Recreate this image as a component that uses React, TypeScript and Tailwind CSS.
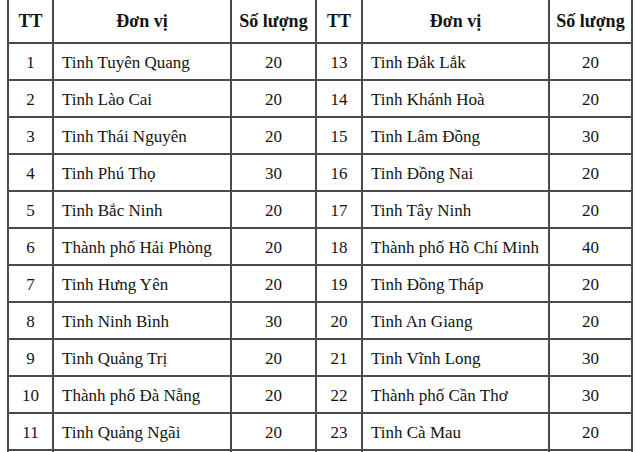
const left = [
  ['1', 'Tinh Tuyên Quang', '20'],
  ['2', 'Tinh Lào Cai', '20'],
  ['3', 'Tinh Thái Nguyên', '20'],
  ['4', 'Tinh Phú Thọ', '30'],
  ['5', 'Tinh Bắc Ninh', '20'],
  ['6', 'Thành phố Hải Phòng', '20'],
  ['7', 'Tinh Hưng Yên', '20'],
  ['8', 'Tinh Ninh Bình', '30'],
  ['9', 'Tinh Quảng Trị', '20'],
  ['10', 'Thành phố Đà Nẵng', '20'],
  ['11', 'Tinh Quảng Ngãi', '20'],
]

const right = [
  ['13', 'Tinh Đắk Lắk', '20'],
  ['14', 'Tinh Khánh Hoà', '20'],
  ['15', 'Tinh Lâm Đồng', '30'],
  ['16', 'Tinh Đồng Nai', '20'],
  ['17', 'Tinh Tây Ninh', '20'],
  ['18', 'Thành phố Hồ Chí Minh', '40'],
  ['19', 'Tinh Đồng Tháp', '20'],
  ['20', 'Tinh An Giang', '20'],
  ['21', 'Tinh Vĩnh Long', '30'],
  ['22', 'Thành phố Cần Thơ', '30'],
  ['23', 'Tinh Cà Mau', '20'],
]

function Head({ children }: { children: React.ReactNode }) {
  return <div className="bg-white flex items-center justify-center font-bold text-[18px]">{children}</div>
}

export default function App() {
  return (
    <div className="w-[640px] h-[452px] overflow-hidden bg-white text-[#141414] text-[17px] [font-family:'Liberation_Serif',serif]">
      <div className="ml-[7px] mt-[-2px] w-[626px] p-[2px] bg-[#4a4a4a] grid grid-cols-[43px_176px_83px_44px_185px_81px] grid-rows-[42px] auto-rows-[35px] gap-[2px]">
        <Head>TT</Head>
        <Head>Đơn vị</Head>
        <Head>Số lượng</Head>
        <Head>TT</Head>
        <Head>Đơn vị</Head>
        <Head>Số lượng</Head>
        {left.map((row, i) => {
          const r = right[i]
          return (
            <div key={i} className="contents">
              <div className="bg-white flex items-center justify-center pt-[3px]">{row[0]}</div>
              <div className="bg-white flex items-center pl-[8px] pt-[3px]">{row[1]}</div>
              <div className="bg-white flex items-center justify-center pt-[3px]">{row[2]}</div>
              <div className="bg-white flex items-center justify-center pt-[3px]">{r[0]}</div>
              <div className="bg-white flex items-center pl-[8px] pt-[3px]">{r[1]}</div>
              <div className="bg-white flex items-center justify-center pt-[3px]">{r[2]}</div>
            </div>
          )
        })}
        <div className="bg-white" />
        <div className="bg-white" />
        <div className="bg-white" />
        <div className="bg-white" />
        <div className="bg-white" />
        <div className="bg-white" />
      </div>
    </div>
  )
}
